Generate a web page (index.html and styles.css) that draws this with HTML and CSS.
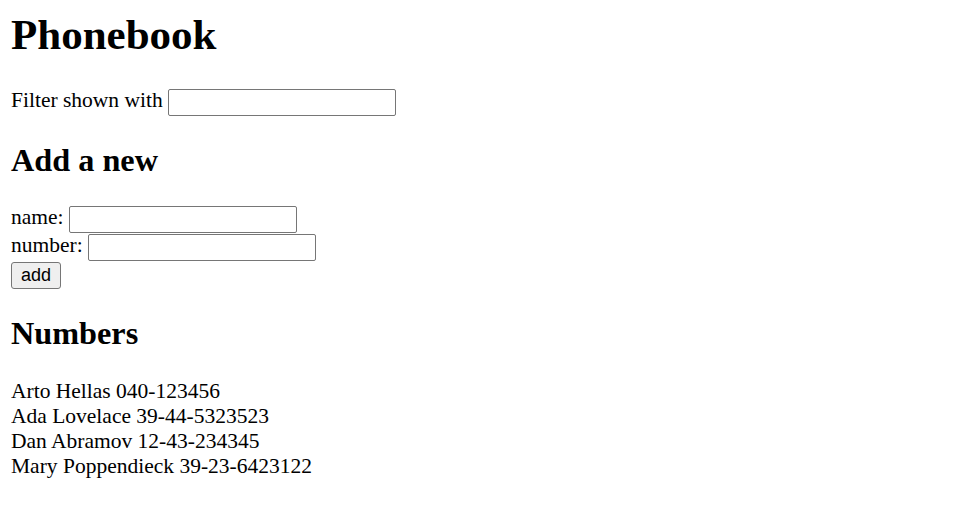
FILE: index.html
```html
<!DOCTYPE html>
<html>
<head>
<meta charset="utf-8">
<title>Phonebook</title>
<link rel="stylesheet" href="styles.css">
</head>
<body>
<div class="app">
  <h1 class="title">Phonebook</h1>
  <div class="row">
    <span class="label">Filter shown with</span>
    <input class="field" type="text">
  </div>
  <h2 class="section">Add a new</h2>
  <form class="add-form">
    <div class="row">
      <span class="label">name:</span>
      <input class="field" type="text">
    </div>
    <div class="row">
      <span class="label">number:</span>
      <input class="field" type="text">
    </div>
    <div class="row">
      <button class="btn" type="button">add</button>
    </div>
  </form>
  <h2 class="section">Numbers</h2>
  <div class="list">
    <div class="person">Arto Hellas 040-123456</div>
    <div class="person">Ada Lovelace 39-44-5323523</div>
    <div class="person">Dan Abramov 12-43-234345</div>
    <div class="person">Mary Poppendieck 39-23-6423122</div>
  </div>
</div>
</body>
</html>
```

FILE: styles.css
```css
html, body {
  background: #fff;
}
body {
  margin: 0 11px;
  font-family: "Liberation Serif", "Times New Roman", serif;
  font-size: 21.5px;
  color: #000;
}
.app {
  display: flow-root;
}
.title {
  font-size: 43px;
  font-weight: bold;
  line-height: 50px;
  margin: 10px 0 29px;
}
.row {
  display: flex;
  align-items: flex-start;
  gap: 5.4px;
  height: 28px;
}
.label {
  line-height: 22px;
  white-space: nowrap;
}
.field {
  box-sizing: border-box;
  width: 228px;
  height: 27px;
  margin: 0;
  border: 1px solid #767676;
  border-radius: 2px;
  padding: 1px 3px;
  font-family: "Liberation Sans", Arial, sans-serif;
  font-size: 18px;
  background: #fff;
}
.section {
  font-size: 32.25px;
  font-weight: bold;
  line-height: 37px;
  margin: 25px 0 27px;
}
.add-form {
  margin: 0;
}
.btn {
  box-sizing: border-box;
  width: 50px;
  height: 27px;
  margin: 0;
  border: 1px solid #767676;
  border-radius: 3px;
  background: #efefef;
  font-family: "Liberation Sans", Arial, sans-serif;
  font-size: 18px;
  color: #000;
  padding: 0;
}
.list {
  line-height: 25px;
}
```
